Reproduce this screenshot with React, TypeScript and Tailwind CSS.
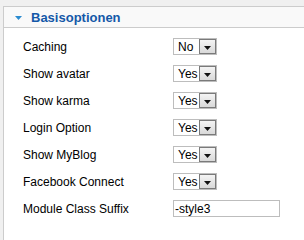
import React from 'react';

const rows: { label: string; value?: string; input?: string }[] = [
  { label: 'Caching', value: 'No' },
  { label: 'Show avatar', value: 'Yes' },
  { label: 'Show karma', value: 'Yes' },
  { label: 'Login Option', value: 'Yes' },
  { label: 'Show MyBlog', value: 'Yes' },
  { label: 'Facebook Connect', value: 'Yes' },
  { label: 'Module Class Suffix', input: '-style3' },
];

function FakeSelect({ value }: { value: string }) {
  return (
    <div className="flex h-[17px] w-[44px] items-stretch border border-[#bdbdbd] bg-white">
      <span className="flex flex-1 items-center pl-[4px] text-[12px] leading-none text-black">{value}</span>
      <span className="flex w-[17px] items-end justify-center border border-[#7a7a7a] bg-gradient-to-b from-[#f4f4f4] to-[#d9d9d9] pb-[3px]">
        <svg width="7" height="4" viewBox="0 0 7 4">
          <path d="M0 0h7L3.5 4z" fill="#111" />
        </svg>
      </span>
    </div>
  );
}

export default function App() {
  return (
    <div className="h-[240px] w-[304px] overflow-hidden bg-[#f0f0f0] pl-[3px] pt-[6px]" style={{ fontFamily: '"Liberation Sans", Arial, sans-serif' }}>
      <div className="h-full border-l border-t border-[#cccccc] bg-white">
        {/* Header */}
        <div className="flex h-[21px] items-center gap-[9px] border-b border-[#cccccc] bg-[#f9f9f9] pl-[11px]">
          <svg width="7" height="4" viewBox="0 0 7 4" className="mt-[1px]">
            <path d="M0 0h7L3.5 4z" fill="#2b8bd0" />
          </svg>
          <span className="text-[13px] font-bold leading-none text-[#1458a8]">Basisoptionen</span>
        </div>

        {/* Options */}
        <div className="pt-[5px]">
          {rows.map((row) => (
            <div key={row.label} className="flex h-[27px] items-center">
              <span className="w-[169px] pl-[19px] text-[12px] text-black">{row.label}</span>
              {row.value ? (
                <FakeSelect value={row.value} />
              ) : (
                <div className="flex h-[17px] w-[107px] items-center border border-[#bdbdbd] bg-white pl-[1px] text-[12px] text-black">
                  {row.input}
                </div>
              )}
            </div>
          ))}
        </div>
      </div>
    </div>
  );
}
